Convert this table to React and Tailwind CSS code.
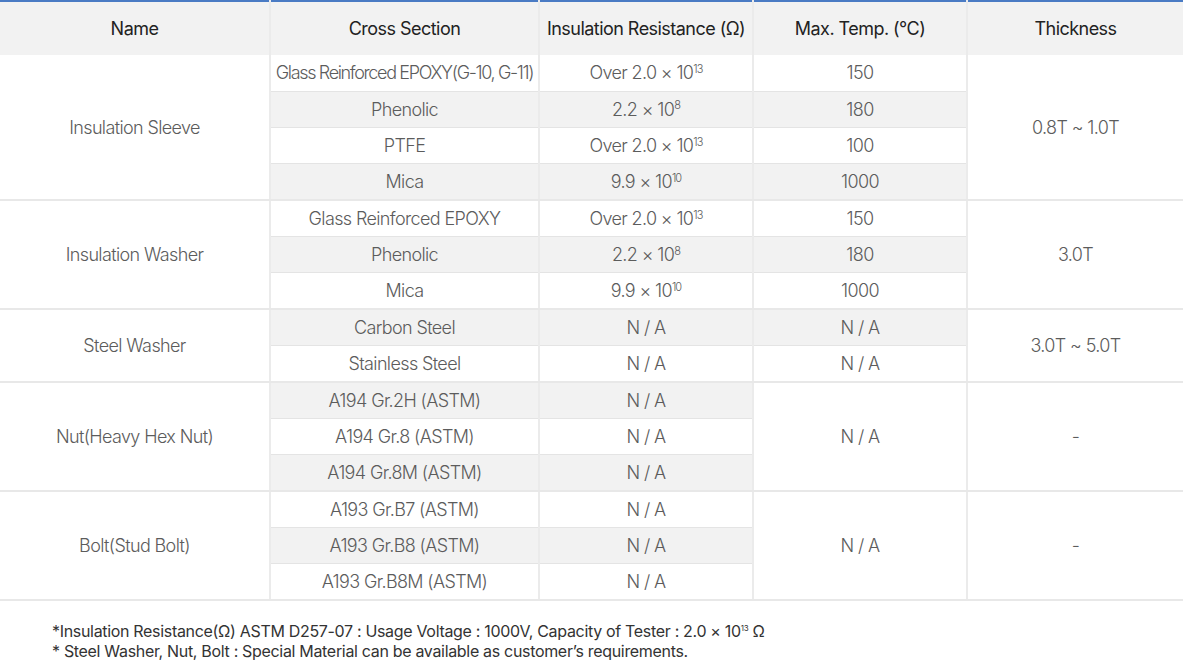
import React from 'react';

const groups = [
  {
    name: 'Insulation Sleeve',
    rows: [
      ['Glass Reinforced EPOXY(G-10, G-11)', ['Over 2.0 × 10', '13'], '150'],
      ['Phenolic', ['2.2 × 10', '8'], '180'],
      ['PTFE', ['Over 2.0 × 10', '13'], '100'],
      ['Mica', ['9.9 × 10', '10'], '1000'],
    ],
    thickness: '0.8T ~ 1.0T',
  },
  {
    name: 'Insulation Washer',
    rows: [
      ['Glass Reinforced EPOXY', ['Over 2.0 × 10', '13'], '150'],
      ['Phenolic', ['2.2 × 10', '8'], '180'],
      ['Mica', ['9.9 × 10', '10'], '1000'],
    ],
    thickness: '3.0T',
  },
  {
    name: 'Steel Washer',
    rows: [
      ['Carbon Steel', 'N / A', 'N / A'],
      ['Stainless Steel', 'N / A', 'N / A'],
    ],
    thickness: '3.0T ~ 5.0T',
  },
  {
    name: 'Nut(Heavy Hex Nut)',
    rows: [
      ['A194 Gr.2H (ASTM)', 'N / A'],
      ['A194 Gr.8 (ASTM)', 'N / A'],
      ['A194 Gr.8M (ASTM)', 'N / A'],
    ],
    temp: 'N / A',
    thickness: '-',
  },
  {
    name: 'Bolt(Stud Bolt)',
    rows: [
      ['A193 Gr.B7 (ASTM)', 'N / A'],
      ['A193 Gr.B8 (ASTM)', 'N / A'],
      ['A193 Gr.B8M (ASTM)', 'N / A'],
    ],
    temp: 'N / A',
    thickness: '-',
  },
];

const Value = ({ v }) =>
  Array.isArray(v) ? (
    <span>
      {v[0]}
      <sup className="relative -top-[0.6em] align-baseline text-[11px] tracking-[-0.08em]">{v[1]}</sup>
    </span>
  ) : (
    <span>{v}</span>
  );

export default function App() {
  let idx = 0;
  return (
    <div
      className="w-[1184px] bg-white"
      style={{ fontFamily: 'Inter, "Noto Sans", sans-serif' }}
    >
      <table className="w-[1183px] table-fixed border-collapse border-t-2 border-t-[#4a7bc4] border-b-2 border-b-[#c4c4c4]">
        <colgroup>
          <col className="w-[270px]" />
          <col className="w-[269px]" />
          <col className="w-[214px]" />
          <col className="w-[214px]" />
          <col className="w-[216px]" />
        </colgroup>
        <thead>
          <tr className="h-[54px] bg-[#f2f2f2] text-[18px] tracking-[-0.03em] text-[#222]">
            <th className="font-normal">Name</th>
            <th className="border-l-2 border-[#ebebeb] font-normal">Cross Section</th>
            <th className="border-l-2 border-[#ebebeb] font-normal">Insulation Resistance (Ω)</th>
            <th className="border-l-2 border-[#ebebeb] font-normal">Max. Temp. (°C)</th>
            <th className="border-l-2 border-[#ebebeb] font-normal">Thickness</th>
          </tr>
        </thead>
        <tbody className="text-[18px] font-light tracking-[-0.035em] text-[#5c5c5c]">
          {groups.map((g) =>
            g.rows.map((r, i) => {
              const gray = idx++ % 2 === 1;
              const bg = gray ? 'bg-[#f2f2f2]' : 'bg-white';
              const last = i === g.rows.length - 1;
              const rowBorder = last ? 'border-b-2 border-b-[#e8e8e8]' : 'border-b border-b-[#e4e4e4]';
              const tight = r[0].length > 28 ? 'tracking-[-0.075em] whitespace-nowrap' : '';
              return (
                <tr key={g.name + i} className="h-[36.33px] text-center">
                  {i === 0 && (
                    <td rowSpan={g.rows.length} className="border-b-2 border-b-[#e8e8e8] bg-white">
                      {g.name}
                    </td>
                  )}
                  <td className={`border-l-2 border-l-[#ebebeb] ${rowBorder} ${bg} ${tight}`}>{r[0]}</td>
                  <td className={`border-l-2 border-l-[#ebebeb] ${rowBorder} ${bg}`}>
                    <Value v={r[1]} />
                  </td>
                  {g.temp ? (
                    i === 0 && (
                      <td rowSpan={g.rows.length} className="border-l-2 border-l-[#ebebeb] border-b-2 border-b-[#e8e8e8] bg-white">
                        {g.temp}
                      </td>
                    )
                  ) : (
                    <td className={`border-l-2 border-l-[#ebebeb] ${rowBorder} ${bg}`}>{r[2]}</td>
                  )}
                  {i === 0 && (
                    <td rowSpan={g.rows.length} className="border-l-2 border-l-[#ebebeb] border-b-2 border-b-[#e8e8e8] bg-white">
                      {g.thickness}
                    </td>
                  )}
                </tr>
              );
            })
          )}
        </tbody>
      </table>
      <div className="pl-[52px] pt-[20px] text-[16px] leading-[20px] tracking-[-0.02em] text-[#333]">
        <p>
          *Insulation Resistance(Ω) ASTM D257-07 : Usage Voltage : 1000V, Capacity of Tester : 2.0 × 10
          <sup className="relative -top-[0.7em] align-baseline text-[8px]">13</sup> Ω
        </p>
        <p>* Steel Washer, Nut, Bolt : Special Material can be available as customer’s requirements.</p>
      </div>
    </div>
  );
}
